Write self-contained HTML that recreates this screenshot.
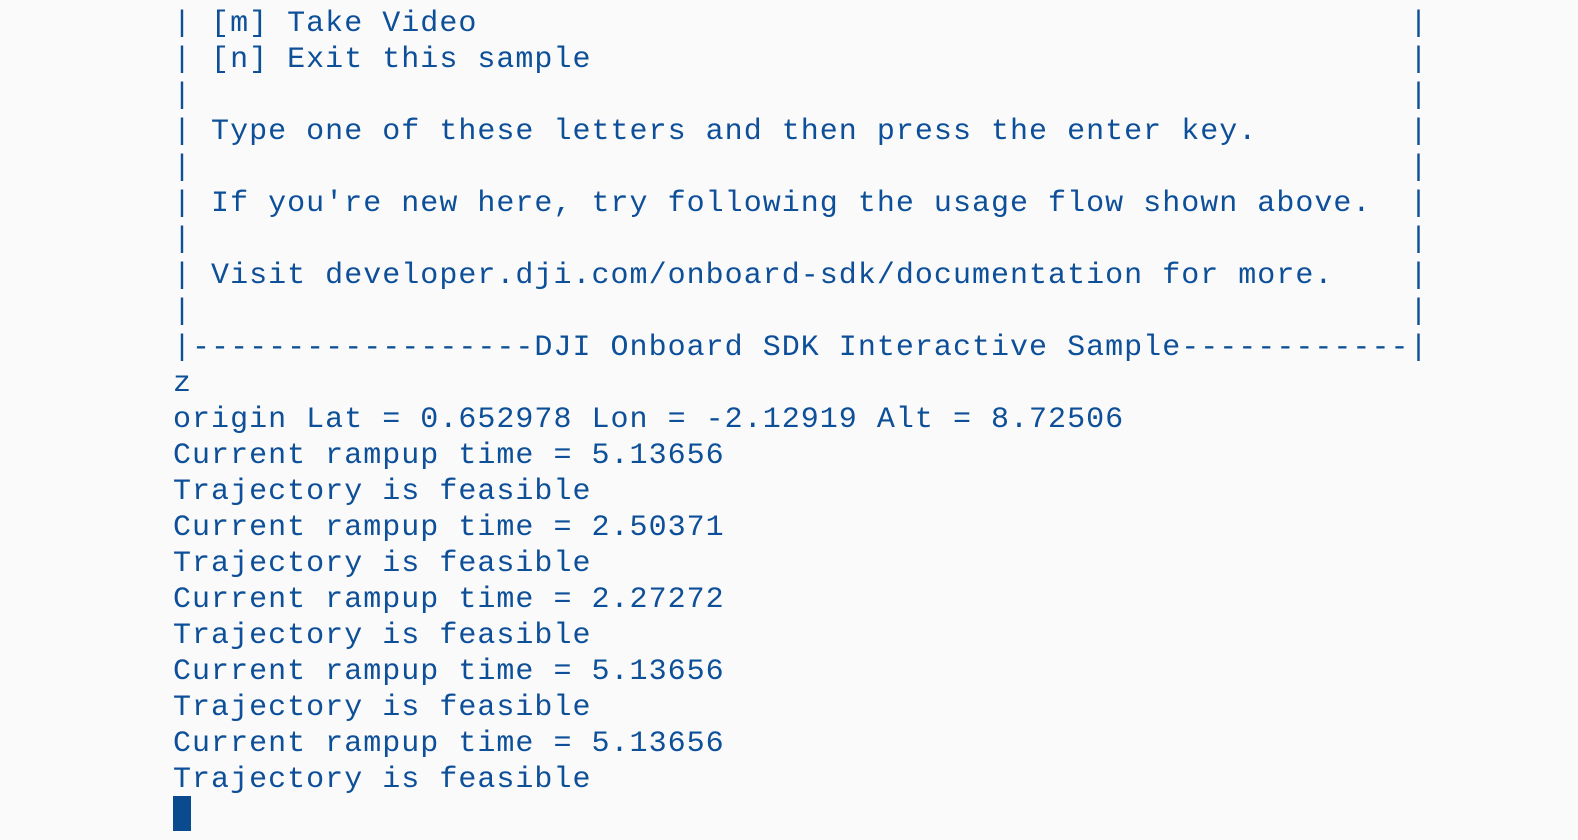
<!DOCTYPE html>
<html><head><meta charset="utf-8"><style>
html,body{margin:0;padding:0;background:#fafafa;width:1578px;height:840px;overflow:hidden}
pre{margin:0;position:absolute;left:173px;top:7px;font-family:"Liberation Mono","DejaVu Sans Mono",monospace;font-size:30px;letter-spacing:1.02px;line-height:35.98px;color:#0d4f98;white-space:pre}
.cur{position:absolute;left:173px;top:796px;width:18px;height:35px;background:#0a4a8f}
</style></head><body>
<pre>| [m] Take Video                                                 |
| [n] Exit this sample                                           |
|                                                                |
| Type one of these letters and then press the enter key.        |
|                                                                |
| If you're new here, try following the usage flow shown above.  |
|                                                                |
| Visit developer.dji.com/onboard-sdk/documentation for more.    |
|                                                                |
|------------------DJI Onboard SDK Interactive Sample------------|
z
origin Lat = 0.652978 Lon = -2.12919 Alt = 8.72506
Current rampup time = 5.13656
Trajectory is feasible
Current rampup time = 2.50371
Trajectory is feasible
Current rampup time = 2.27272
Trajectory is feasible
Current rampup time = 5.13656
Trajectory is feasible
Current rampup time = 5.13656
Trajectory is feasible</pre>
<div class="cur"></div>
</body></html>
